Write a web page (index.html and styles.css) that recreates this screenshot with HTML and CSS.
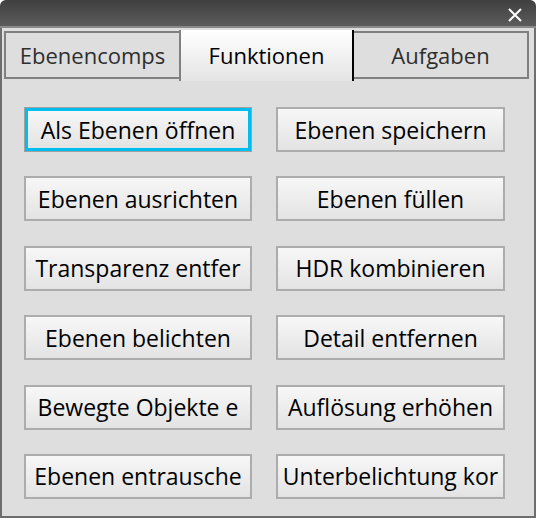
FILE: index.html
```html
<!DOCTYPE html>
<html>
<head>
<meta charset="utf-8">
<link rel="stylesheet" href="styles.css">
</head>
<body>
<div class="window">
  <div class="titlebar">
    <svg class="close" width="14" height="14" viewBox="0 0 14 14"><path d="M1 1 L13 13 M13 1 L1 13" stroke="#fff" stroke-width="2" fill="none"/></svg>
  </div>
  <div class="frame">
    <div class="tabs">
      <div class="tab">Ebenencomps</div>
      <div class="tab active">Funktionen</div>
      <div class="tab last">Aufgaben</div>
    </div>
    <div class="grid">
      <div class="btn focus"><span>Als Ebenen öffnen</span></div>
      <div class="btn"><span>Ebenen speichern</span></div>
      <div class="btn"><span>Ebenen ausrichten</span></div>
      <div class="btn"><span>Ebenen füllen</span></div>
      <div class="btn"><span>Transparenz entfer</span></div>
      <div class="btn"><span>HDR kombinieren</span></div>
      <div class="btn"><span>Ebenen belichten</span></div>
      <div class="btn"><span>Detail entfernen</span></div>
      <div class="btn"><span>Bewegte Objekte e</span></div>
      <div class="btn"><span>Auflösung erhöhen</span></div>
      <div class="btn"><span>Ebenen entrausche</span></div>
      <div class="btn"><span>Unterbelichtung kor</span></div>
    </div>
  </div>
</div>
</body>
</html>
```
FILE: styles.css
```css
html, body {
  margin: 0;
  padding: 0;
  background: #ffffff;
}
.window {
  width: 536px;
  height: 518px;
  display: flex;
  flex-direction: column;
  font-family: "Open Sans", "Noto Sans", sans-serif;
  border-radius: 6px 6px 0 0;
  overflow: hidden;
  background: #dedede;
}
.titlebar {
  height: 26px;
  flex: none;
  background: linear-gradient(#3f3f3f, #5c5c5c);
  border-bottom: 2px solid #8a8a8a;
  display: flex;
  justify-content: flex-end;
  align-items: flex-start;
  padding-right: 14px;
}
.close {
  margin-top: 8px;
}
.frame {
  flex: 1;
  border: 2px solid #6e6e6e;
  border-top: none;
  padding-top: 2px;
  display: flex;
  flex-direction: column;
}
.tabs {
  display: flex;
  margin-left: 2px;
  height: 51px;
  align-items: flex-start;
}
.tab {
  width: 173px;
  height: 44px;
  margin-top: 1px;
  border: 2px solid #808080;
  border-right: none;
  background: #dedede;
  color: #2e2e2e;
  font-size: 22px;
  display: flex;
  align-items: center;
  justify-content: center;
}
.tab.last {
  border-right: 2px solid #808080;
  width: 173px;
}
.tab.active {
  margin-top: 0;
  height: 51px;
  border: none;
  border-left: 2px solid #808080;
  border-right: 2px solid #000;
  background: linear-gradient(#ffffff, #e4e4e4);
  color: #000;
  padding-bottom: 2px;
  box-sizing: border-box;
  width: 175px;
}
.tab.active + .tab { border-left: none; }
.grid {
  display: grid;
  grid-template-columns: 228px 229px;
  grid-auto-rows: 45px;
  column-gap: 24px;
  row-gap: 24.4px;
  margin-top: 26px;
  margin-left: 22px;
}
.btn {
  box-sizing: border-box;
  border: 2px solid #acacac;
  background: linear-gradient(#f7f7f7, #e3e3e3);
  color: #000;
  font-size: 23px;
  display: flex;
  align-items: center;
  justify-content: center;
  overflow: hidden;
  white-space: nowrap;
}
.btn.focus {
  border: 3px solid #00bff0;
  box-shadow: 0 0 0 1px #a0a0a0;
  margin: 1px;
}
```
